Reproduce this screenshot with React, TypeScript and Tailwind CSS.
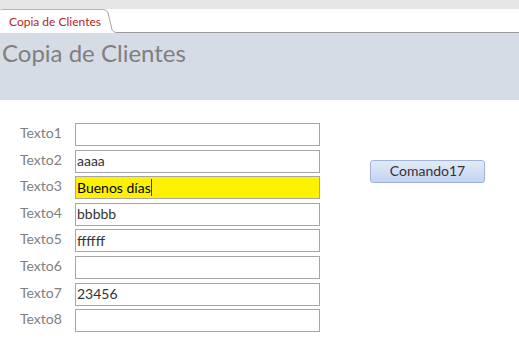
import React from "react";

const fields: { label: string; value: string; active?: boolean }[] = [
  { label: "Texto1", value: "" },
  { label: "Texto2", value: "aaaa" },
  { label: "Texto3", value: "Buenos días", active: true },
  { label: "Texto4", value: "bbbbb" },
  { label: "Texto5", value: "ffffff" },
  { label: "Texto6", value: "" },
  { label: "Texto7", value: "23456" },
  { label: "Texto8", value: "" },
];

export default function App() {
  return (
    <div className="w-[519px] h-[354px] bg-white overflow-hidden" style={{ fontFamily: "Lato, 'Open Sans', sans-serif" }}>
      {/* Tab strip */}
      <div className="h-[9px] bg-[#e6e6e6]" />
      <div className="flex h-[24px] bg-white">
        <div className="flex items-center pl-[9px] pr-[1px] h-[24px] border-t border-[#b8b4ad] rounded-tl-[2px] bg-white">
          <span className="text-[12px] leading-none text-[#b1252c] mt-[1px]">Copia de Clientes</span>
        </div>
        <svg width="14" height="24" viewBox="0 0 14 24" className="shrink-0">
          <path d="M0 0.5 H1.5 Q4.5 0.5 6 4 L10 20.5 Q11.5 23.5 14 23.5" fill="none" stroke="#a8a39a" strokeWidth="1" />
        </svg>
        <div className="flex-1 border-b border-[#9a9a9a]" />
      </div>

      {/* Header band */}
      <div className="h-[67px] bg-[#d6dce5] pl-[2px] pt-[5px]">
        <h1 className="text-[24px] leading-[30px] text-[#7f7f7f]">Copia de Clientes</h1>
      </div>

      {/* Form body */}
      <div className="flex pt-[23px]">
        <div className="flex flex-col gap-[3.6px]">
          {fields.map((f) => (
            <div key={f.label} className="flex items-center h-[23px]">
              <span className="w-[62px] pl-[20px] text-[14px] text-[#808080] leading-none -mt-[3px]">{f.label}</span>
              <div
                className={`ml-[13px] w-[245px] h-[23px] border border-[#a6a6a6] flex items-center pl-[1px] text-[14px] leading-none ${
                  f.active ? "bg-[#fff200] text-black" : "bg-white text-[#333333]"
                }`}
              >
                <span>{f.value}</span>
                {f.active && <span className="w-px h-[17px] bg-[#1f2fd0]" />}
              </div>
            </div>
          ))}
        </div>
        <div className="ml-[50px] mt-[35px]">
          <button className="w-[115px] h-[23px] rounded-[3px] border border-[#9eb4dc] bg-gradient-to-b from-[#e3ebf9] to-[#c2d3f2] text-[14px] text-[#333333] leading-none">
            Comando17
          </button>
        </div>
      </div>
    </div>
  );
}
